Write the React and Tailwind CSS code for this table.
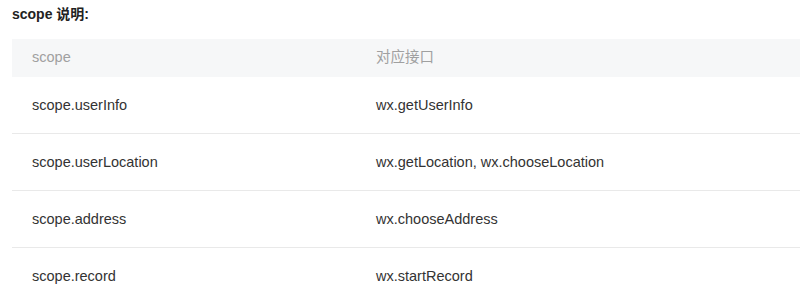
export default function App() {
  const rows = [
    ["scope.userInfo", "wx.getUserInfo"],
    ["scope.userLocation", "wx.getLocation, wx.chooseLocation"],
    ["scope.address", "wx.chooseAddress"],
    ["scope.record", "wx.startRecord"],
  ];
  return (
    <div className="w-[800px] h-[299px] overflow-hidden bg-white" style={{ fontFamily: '"Liberation Sans", "Noto Sans CJK SC", sans-serif' }}>
      <div className="pl-[12px] pt-[5px] h-[39px] text-[14px] font-bold text-[#222] leading-[18px]">scope 说明:</div>
      <div className="ml-[12px]">
        <div className="flex h-[38px] items-center bg-[#f6f7f8] pl-[20px] text-[14.5px] text-[#a0a0a0]">
          <div className="w-[344px] shrink-0">scope</div>
          <div className="flex-1">对应接口</div>
        </div>
        {rows.map(([a, b], i) => (
          <div key={i} className="flex h-[57px] items-center border-b border-[#e9e9e9] pl-[20px] pt-[2px] text-[14.5px] text-[#333]">
            <div className="w-[344px] shrink-0">{a}</div>
            <div className="flex-1">{b}</div>
          </div>
        ))}
      </div>
    </div>
  );
}
